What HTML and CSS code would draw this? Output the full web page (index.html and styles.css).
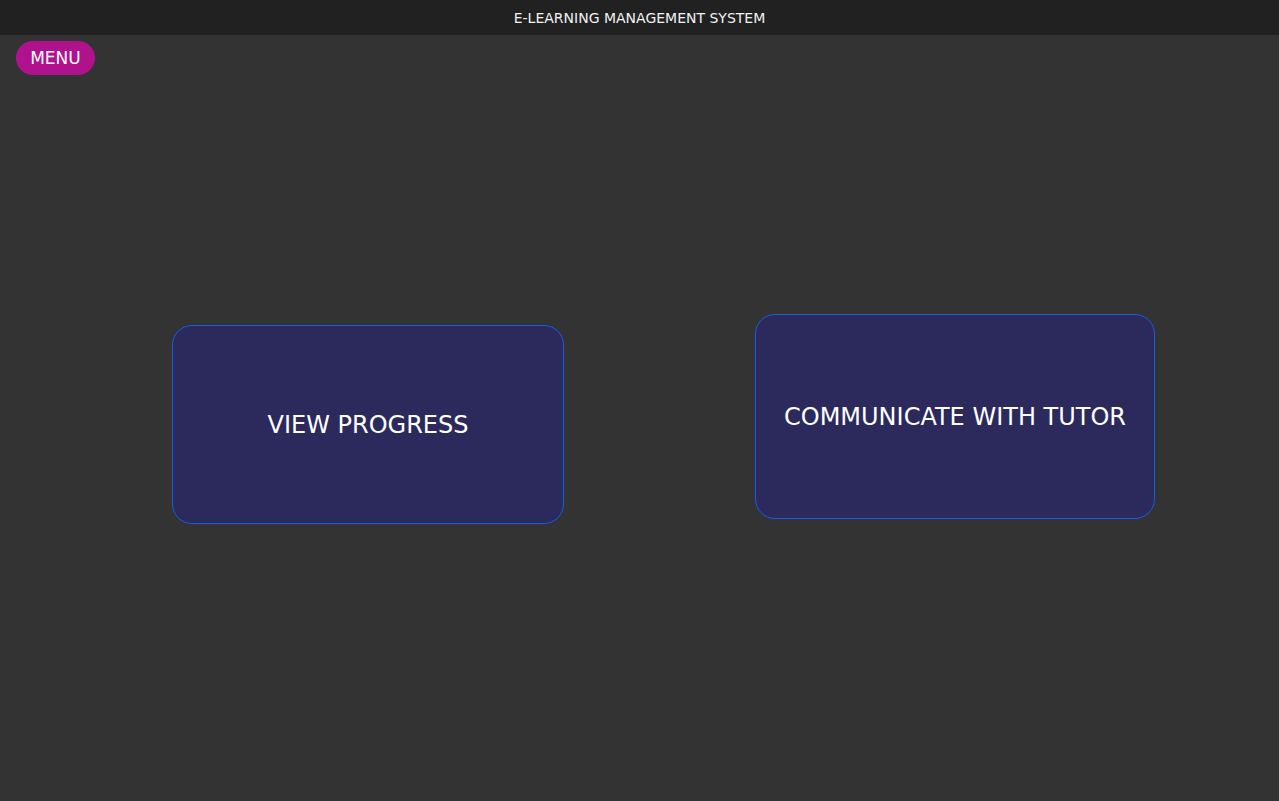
FILE: index.html
```html
<!DOCTYPE html>
<html>
<head>
<meta charset="utf-8">
<link rel="stylesheet" href="styles.css">
</head>
<body>
<header class="topbar">E-LEARNING MANAGEMENT SYSTEM</header>
<div class="toolbar"><button class="menu-btn">MENU</button></div>
<main class="cards">
  <div class="card card-progress">VIEW PROGRESS</div>
  <div class="card card-tutor">COMMUNICATE WITH TUTOR</div>
</main>
</body>
</html>
```
FILE: styles.css
```css
html, body {
  margin: 0;
  padding: 0;
  height: 100%;
}
body {
  background: #333333;
  font-family: "DejaVu Sans", sans-serif;
  color: #ffffff;
}
.topbar {
  height: 35px;
  background: #212121;
  display: flex;
  align-items: center;
  justify-content: center;
  font-size: 14px;
  color: #f2f2f2;
}
.toolbar {
  padding: 6px 16px 0;
  height: 34px;
}
.menu-btn {
  height: 34px;
  width: 79px;
  border: none;
  border-radius: 17px;
  background: #b0128e;
  color: #ffffff;
  font-family: "DejaVu Sans", sans-serif;
  font-size: 17px;
  padding: 0;
}
.cards {
  display: flex;
  align-items: flex-start;
  padding-left: 172px;
  gap: 191px;
}
.card {
  box-sizing: border-box;
  display: flex;
  align-items: center;
  justify-content: center;
  background: #2c2a5c;
  border: 1px solid #1a5ce0;
  border-radius: 20px;
  font-size: 24px;
  color: #ffffff;
}
.card-progress {
  width: 392px;
  height: 199px;
  margin-top: 250px;
}
.card-tutor {
  width: 400px;
  height: 205px;
  margin-top: 239px;
}
```
